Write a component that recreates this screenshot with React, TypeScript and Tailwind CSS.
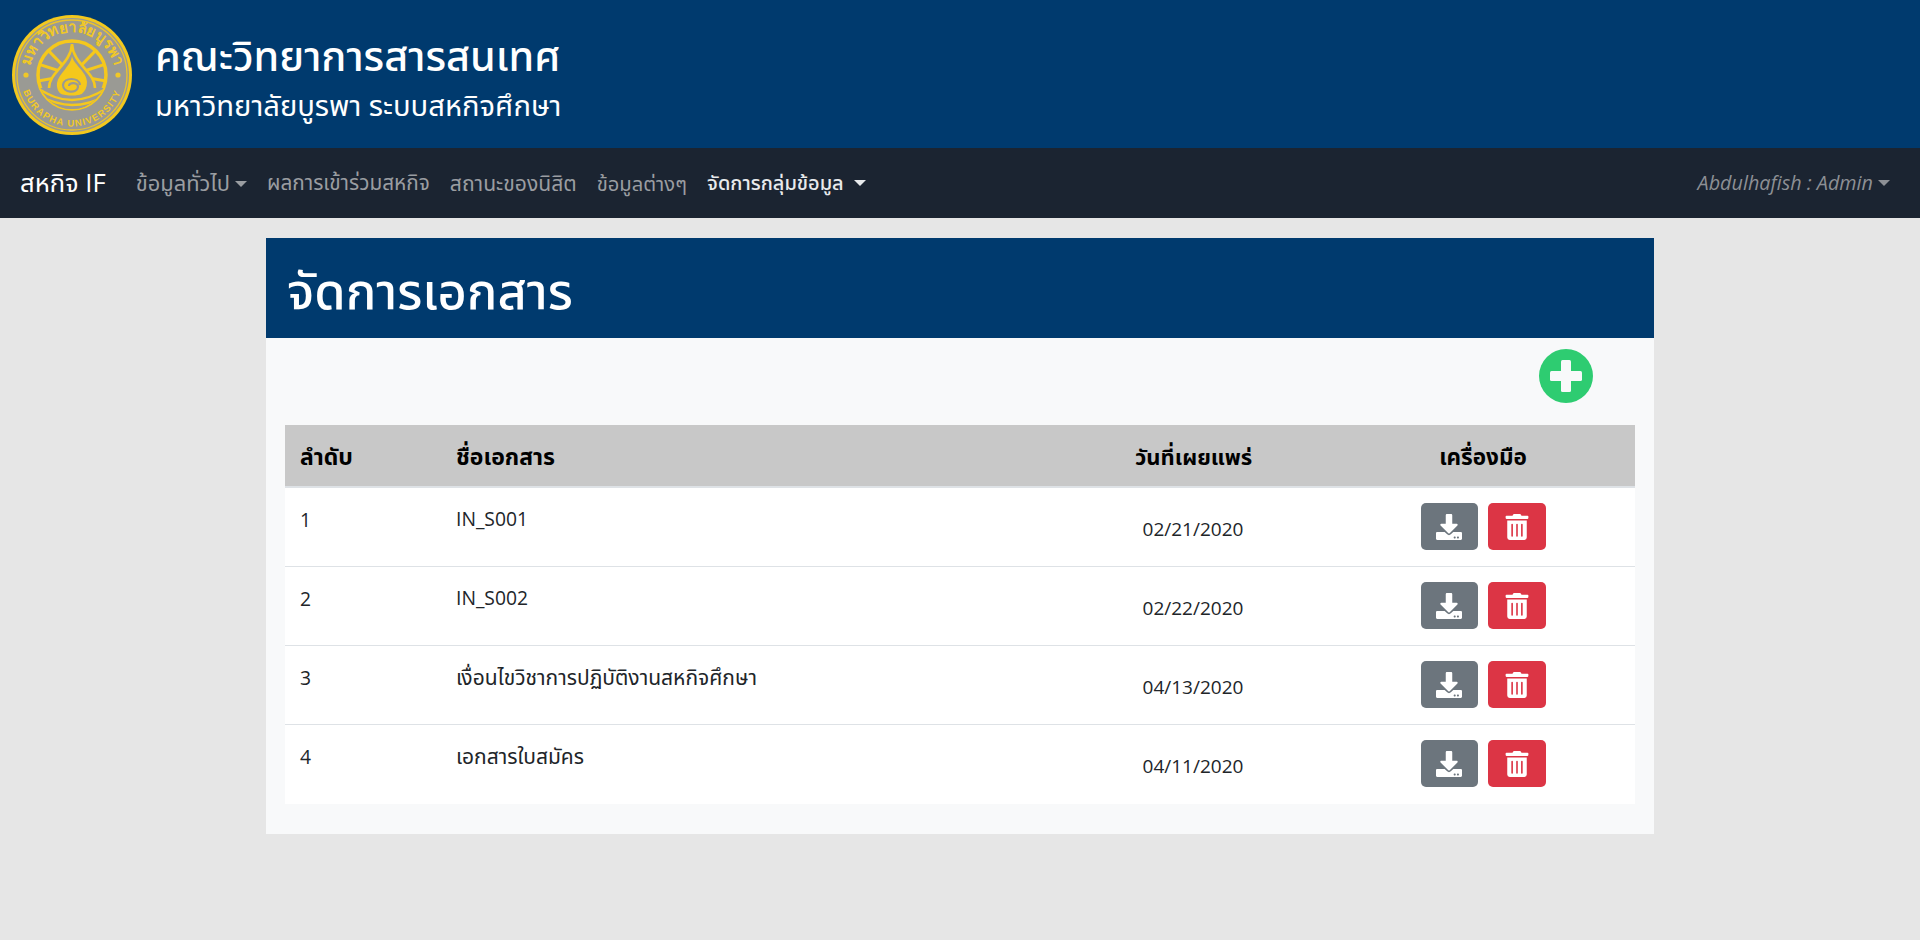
import React from "react";
import { FaDownload, FaTrashAlt } from "react-icons/fa";

function Logo() {
  const rays = [-100, -72, -44, 44, 72, 100];
  const y = "#f5c81c";
  const g = "#9a9a94";
  return (
    <svg width="120" height="120" viewBox="1 1 120 120" className="shrink-0 mt-[2px]">
      <defs>
        <path id="top" d="M 18 61 A 43 43 0 0 1 104 61" />
        <path id="bot" d="M 9.5 61 A 51.5 51.5 0 0 0 112.5 61" />
        <clipPath id="wheel"><circle cx="61" cy="61" r="34" /></clipPath>
      </defs>
      <circle cx="61" cy="61" r="60" fill="#f2c81e" />
      <circle cx="61" cy="61" r="57" fill={g} />
      <circle cx="61" cy="61" r="55" fill="none" stroke="#ecc42a" strokeWidth="1.3" />
      <text fontSize="15" fontWeight="700" fill="#f0c828" textAnchor="middle" fontFamily="'Noto Sans',sans-serif">
        <textPath href="#top" startOffset="50%">มหาวิทยาลัยบูรพา</textPath>
      </text>
      <text fontSize="9.5" fontWeight="700" fill="#f0c828" textAnchor="middle" letterSpacing="1.2" fontFamily="'Liberation Sans',sans-serif">
        <textPath href="#bot" startOffset="50%">BURAPHA  UNIVERSITY</textPath>
      </text>
      <circle cx="15" cy="61" r="2.6" fill="#f0c828" />
      <circle cx="107" cy="61" r="2.6" fill="#f0c828" />
      <circle cx="61" cy="61" r="34" fill="none" stroke={y} strokeWidth="3.5" />
      <g clipPath="url(#wheel)">
        {rays.map((a) => (
          <line key={a} x1="61" y1="61" x2={61 + 36 * Math.sin((a * Math.PI) / 180)} y2={61 - 36 * Math.cos((a * Math.PI) / 180)} stroke={y} strokeWidth="3" />
        ))}
        <path d="M61 30 C62 50 84 58 84 74 L84 96 L38 96 L38 74 C38 58 60 50 61 30Z" fill={g} stroke={y} strokeWidth="2.6" />
        <path d="M61 42 C62 50 76 58 76 68 C76 79 68 83 60 83 C50 83 45 77 46 69 C47 60 60 52 61 42Z" fill={y} />
        <path d="M69 71 C68 63 53 63 52 71 C52 79 66 80 67 73 C67 68 58 68 58 72" fill="none" stroke={g} strokeWidth="2.2" />
        <path d="M24 74 L40 74 C48 84 74 84 82 74 L98 74 L98 100 L24 100Z" fill={g} />
        <path d="M26 74 C40 82 48 86 61 86 C74 86 84 82 96 74 M26 81 C40 88 50 91 61 91 C72 91 84 88 96 81" fill="none" stroke={y} strokeWidth="2.4" />
      </g>
    </svg>
  );
}

const caret = <span className="ml-[5px] inline-block w-0 h-0 border-x-[6px] border-x-transparent border-t-[6px] border-t-current align-[4px]" />;

const rows = [
  ["1", "IN_S001", "02/21/2020", "text-[19.3px] pt-[17px]"],
  ["2", "IN_S002", "02/22/2020", "text-[19.3px] pt-[17px]"],
  ["3", "เงื่อนไขวิชาการปฏิบัติงานสหกิจศึกษา", "04/13/2020", "text-[21px] pt-[16px]"],
  ["4", "เอกสารใบสมัคร", "04/11/2020", "text-[21px] pt-[16px]"],
];

export default function App() {
  return (
    <div className="min-h-[940px] bg-[#e6e6e6] text-[#212529] font-['Open_Sans','Noto_Sans','Noto_Sans_Thai',sans-serif]">
      <header className="h-[148px] bg-[#003a6e] flex items-center pl-3 gap-[23px] text-white">
        <Logo />
        <div className="pt-[4px]">
          <div className="text-[41.4px] leading-[52px] font-medium">คณะวิทยาการสารสนเทศ</div>
          <div className="text-[29.2px] leading-[38px] mt-[5px]">มหาวิทยาลัยบูรพา ระบบสหกิจศึกษา</div>
        </div>
      </header>
      <nav className="h-[70px] bg-[#1b2431] flex items-center pl-5 pr-[30px] text-[20.5px]">
        <span className="text-[25.6px] text-white mr-[30px]">สหกิจ IF</span>
        <div className="flex items-center gap-5 text-[#9a9da1]">
          <span className="text-[21.9px]">ข้อมูลทั่วไป{caret}</span>
          <span className="text-[20.8px]">ผลการเข้าร่วมสหกิจ</span>
          <span className="text-[21.1px]">สถานะของนิสิต</span>
          <span className="text-[20.2px]">ข้อมูลต่างๆ</span>
          <span className="text-[#e8eaec] text-[20px] font-medium">จัดการกลุ่มข้อมูล {caret}</span>
        </div>
        <span className="ml-auto italic text-[#8d9095] text-[19.8px]">Abdulhafish : Admin{caret}</span>
      </nav>
      <main className="w-[1388px] h-[596px] mx-auto mt-5 bg-[#f8f9fa]">
        <div className="h-[100px] bg-[#003a6e] text-white flex items-center px-[21px] pt-[4px] text-[50.5px] font-medium">จัดการเอกสาร</div>
        <div className="px-[19px]">
          <div className="h-[87px] flex justify-end items-start pt-[11px] pr-[42px]">
            <button className="w-[54px] h-[54px] rounded-full bg-[#2ecc71] flex items-center justify-center">
              <svg width="32" height="32" viewBox="0 0 32 32" fill="#f8f9fa">
                <rect x="11" y="0" width="10" height="32" rx="1.5" />
                <rect x="0" y="11" width="32" height="10" rx="1.5" />
              </svg>
            </button>
          </div>
          <div className="bg-white">
            <div className="h-[59px] pt-[2px] bg-[#c8c8c8] border-b-2 border-[#dee2e6] flex items-center font-bold text-black text-[22px] box-content">
              <div className="w-[171px] pl-[15px] text-[23px]">ลำดับ</div>
              <div className="flex-1 text-[23px]">ชื่อเอกสาร</div>
              <div className="w-[260px] text-center pr-[15px]">วันที่เผยแพร่</div>
              <div className="w-[304px] text-center text-[22.5px]">เครื่องมือ</div>
            </div>
            {rows.map((r) => (
              <div key={r[0]} className="h-[79px] flex border-b border-[#dee2e6] last:border-b-0">
                <div className="w-[171px] pl-[15px] pt-[18px] text-[19.3px]">{r[0]}</div>
                <div className={"flex-1 " + r[3]}>{r[1]}</div>
                <div className="w-[260px] text-center pt-[27px] pr-[16px] text-[19px]">{r[2]}</div>
                <div className="w-[304px] pt-[15px] flex justify-center gap-[10px]">
                  <button className="w-[57px] h-[47px] rounded-[5px] bg-[#6c757d] text-white flex items-center justify-center"><FaDownload size={26} /></button>
                  <button className="w-[58px] h-[47px] rounded-[5px] bg-[#dc3545] text-white flex items-center justify-center"><FaTrashAlt size={26} /></button>
                </div>
              </div>
            ))}
          </div>
        </div>
      </main>
    </div>
  );
}
